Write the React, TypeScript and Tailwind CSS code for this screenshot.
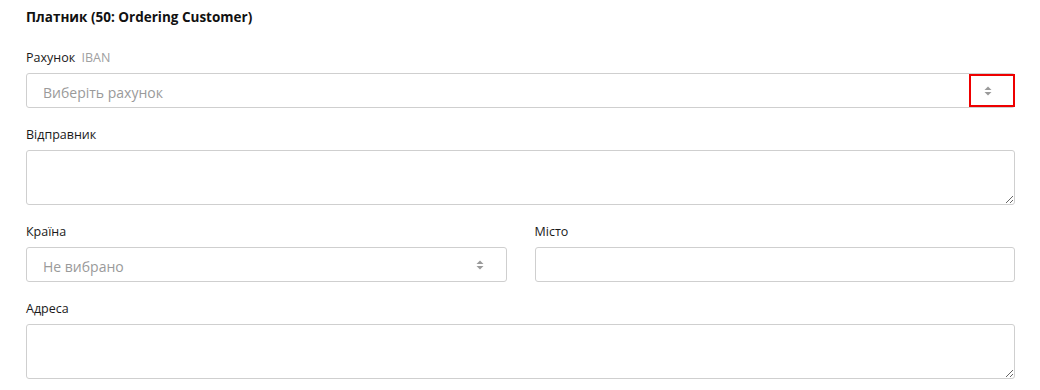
import React from "react";

function Arrows() {
  return (
    <svg width="8" height="10" viewBox="0 0 8 10" className="text-[#9a9a9a]">
      <path d="M4 0.5 L7.5 4 H0.5 Z" fill="currentColor" />
      <path d="M4 9.5 L7.5 6 H0.5 Z" fill="currentColor" />
    </svg>
  );
}

function Label({ children }: { children: React.ReactNode }) {
  return <div className="text-[12.5px] leading-5 text-[#1a1a1a] mb-[5px]">{children}</div>;
}

function Select({ placeholder, highlight }: { placeholder: string; highlight?: boolean }) {
  return (
    <div className="relative h-[35px] border border-[#cfcfcf] rounded-[3px] flex items-center pl-[16px] pr-[22px] bg-white">
      <span className="flex-1 text-[14px] text-[#9a9a9a] pt-[3px]">{placeholder}</span>
      <Arrows />
      {highlight && (
        <div className="absolute right-[-1px] top-0 bottom-0 w-[46px] border-2 border-[#ee0000]" />
      )}
    </div>
  );
}

export default function App() {
  return (
    <div className="bg-white w-[1040px] h-[390px] overflow-hidden px-[26px] pt-[7px] font-['Open_Sans',sans-serif] text-[#1a1a1a]">
      <h2 className="text-[13.5px] leading-5 font-bold text-[#111] mb-[21px]">Платник (50: Ordering Customer)</h2>
      <div className="w-[989px] flex flex-col gap-[17px]">
        <div>
          <Label>
            Рахунок <span className="text-[#a0a0a0] ml-[3px]">IBAN</span>
          </Label>
          <Select placeholder="Виберіть рахунок" highlight />
        </div>
        <div>
          <Label>Відправник</Label>
          <textarea className="block w-full h-[55px] border border-[#cfcfcf] rounded-[3px] outline-none" />
        </div>
        <div className="grid grid-cols-2 gap-[28px]">
          <div>
            <Label>Країна</Label>
            <Select placeholder="Не вибрано" />
          </div>
          <div>
            <Label>Місто</Label>
            <div className="h-[35px] border border-[#cfcfcf] rounded-[3px]" />
          </div>
        </div>
        <div>
          <Label>Адреса</Label>
          <textarea className="block w-full h-[55px] border border-[#cfcfcf] rounded-[3px] outline-none" />
        </div>
      </div>
    </div>
  );
}
